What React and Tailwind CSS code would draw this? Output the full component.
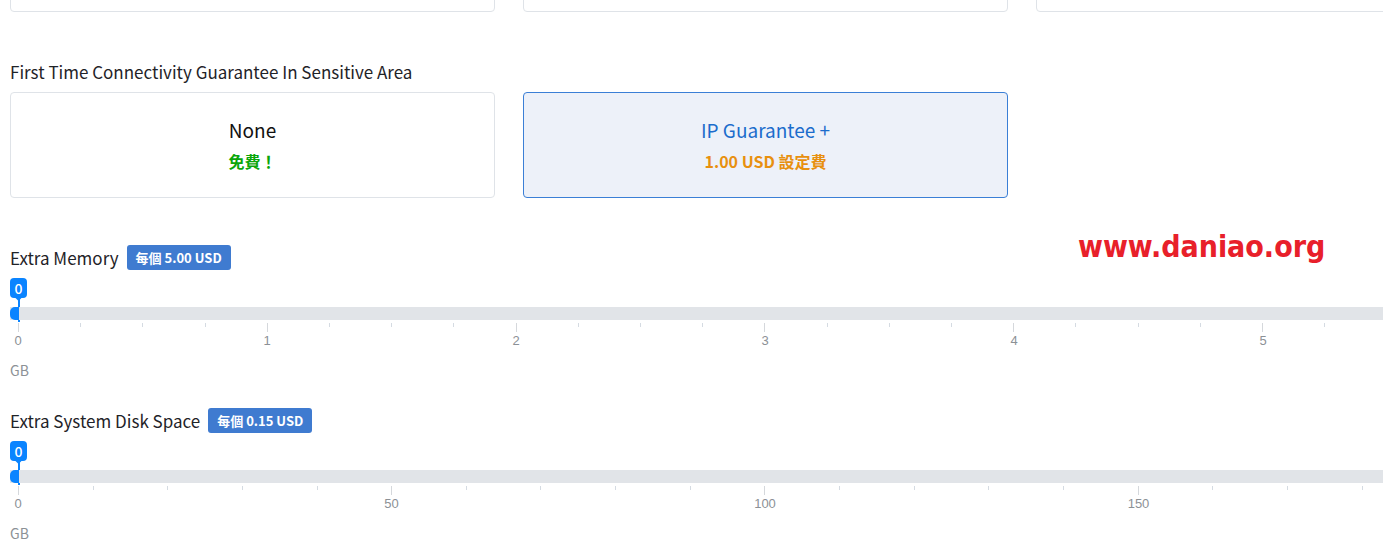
import React from 'react';

const SANS = { fontFamily: '"Noto Sans CJK TC", "Noto Sans", sans-serif' };

const Card = ({ title, price, selected, priceClass }) => (
  <div
    className={
      'flex h-[106px] flex-col items-center justify-center rounded-[4px] border ' +
      (selected ? 'border-[#3b7fd6] bg-[#edf1f9]' : 'border-[#dfe3e8] bg-white')
    }
  >
    <div className={'text-[19px] leading-[26px] ' + (selected ? 'text-[#1b6ccc]' : 'text-[#111]')}>{title}</div>
    <div className={'mt-[6px] text-[16px] font-bold leading-[24px] ' + priceClass}>{price}</div>
  </div>
);

const Slider = ({ label, badge, ticks, majorEvery, labels }) => (
  <div>
    <div className="flex h-[25px] items-center gap-[8px]">
      <span className="text-[17px] text-[#1f2328]">{label}</span>
      <span className="flex h-[25px] items-center rounded-[3px] bg-[#3f7bd0] px-[9px] text-[13px] font-bold text-white">
        {badge}
      </span>
    </div>

    <div className="relative pt-[37px]">
      {/* value bubble */}
      <div className="absolute left-0 top-[8px] flex h-[20px] w-[17px] items-center justify-center rounded-[4px] bg-[#0a84ff] text-[14px] font-medium leading-none text-white">
        0
      </div>
      <div className="absolute left-[6px] top-[25px] h-[5px] w-[5px] rotate-45 bg-[#0a84ff]" />
      <div className="absolute left-[8px] top-[29px] h-[23px] w-[2px] bg-[#0a84ff]" />

      {/* track */}
      <div className="relative h-[13px] bg-[#e1e4e8]">
        <div className="absolute left-0 top-0 h-[13px] w-[9px] rounded-l-[5px] bg-[#0a84ff]" />
      </div>

      {/* ticks */}
      <div className="ml-[8px] mr-[9px] mt-[3px] flex h-[9px] items-start justify-between">
        {Array.from({ length: ticks }).map((_, i) => (
          <div
            key={i}
            className={i % majorEvery === 0 ? 'h-[9px] w-[1px] bg-[#d5d8dc]' : 'h-[4px] w-[1px] bg-[#d5dbe2]'}
          />
        ))}
      </div>

      {/* scale labels */}
      <div
        className="ml-[8px] mr-[9px] mt-[1px] flex h-[15px] justify-between text-[13px] leading-[15px] text-[#8c9196]"
        style={{ fontFamily: '"Liberation Sans", Arial, sans-serif' }}
      >
        {labels.map((l, i) => (
          <div key={l} className="flex w-0 justify-center">
            <span className={i === labels.length - 1 ? 'invisible' : ''}>{l}</span>
          </div>
        ))}
      </div>
    </div>

    <div className="mt-[12px] text-[14px] leading-[20px] text-[#8c9196]">GB</div>
  </div>
);

export default function App() {
  return (
    <div className="relative h-[545px] w-[1383px] overflow-hidden bg-white" style={SANS}>
      <div className="w-[1521px] pl-[10px]">
        {/* row of cards above, mostly scrolled off */}
        <div className="-mt-[94px] grid grid-cols-3 gap-[28px]">
          <div className="h-[106px] rounded-[4px] border border-[#dfe3e8]" />
          <div className="h-[106px] rounded-[4px] border border-[#dfe3e8]" />
          <div className="h-[106px] rounded-[4px] border border-[#dfe3e8]" />
        </div>

        <div className="mt-[48px] text-[17px] leading-[24px] text-[#1f2328]">
          First Time Connectivity Guarantee In Sensitive Area
        </div>
        <div className="mt-[8px] grid grid-cols-3 gap-[28px]">
          <Card title="None" price="免費！" priceClass="text-[#0aa60a]" />
          <Card title="IP Guarantee +" price="1.00 USD 設定費" priceClass="text-[#e8900f]" selected />
        </div>

        <div className="mt-[47px]">
          <Slider
            label="Extra Memory"
            badge="每個 5.00 USD"
            ticks={25}
            majorEvery={4}
            labels={['0', '1', '2', '3', '4', '5', '6']}
          />
        </div>

        <div className="mt-[28px]">
          <Slider
            label="Extra System Disk Space"
            badge="每個 0.15 USD"
            ticks={21}
            majorEvery={5}
            labels={['0', '50', '100', '150', '200']}
          />
        </div>
      </div>

      {/* watermark */}
      <div
        className="absolute left-[1078px] top-[227px] text-[30px] font-bold leading-[40px] text-[#e8202a] font-stretch-condensed"
        style={{ fontFamily: '"DejaVu Sans", sans-serif' }}
      >
        www.daniao.org
      </div>
    </div>
  );
}
